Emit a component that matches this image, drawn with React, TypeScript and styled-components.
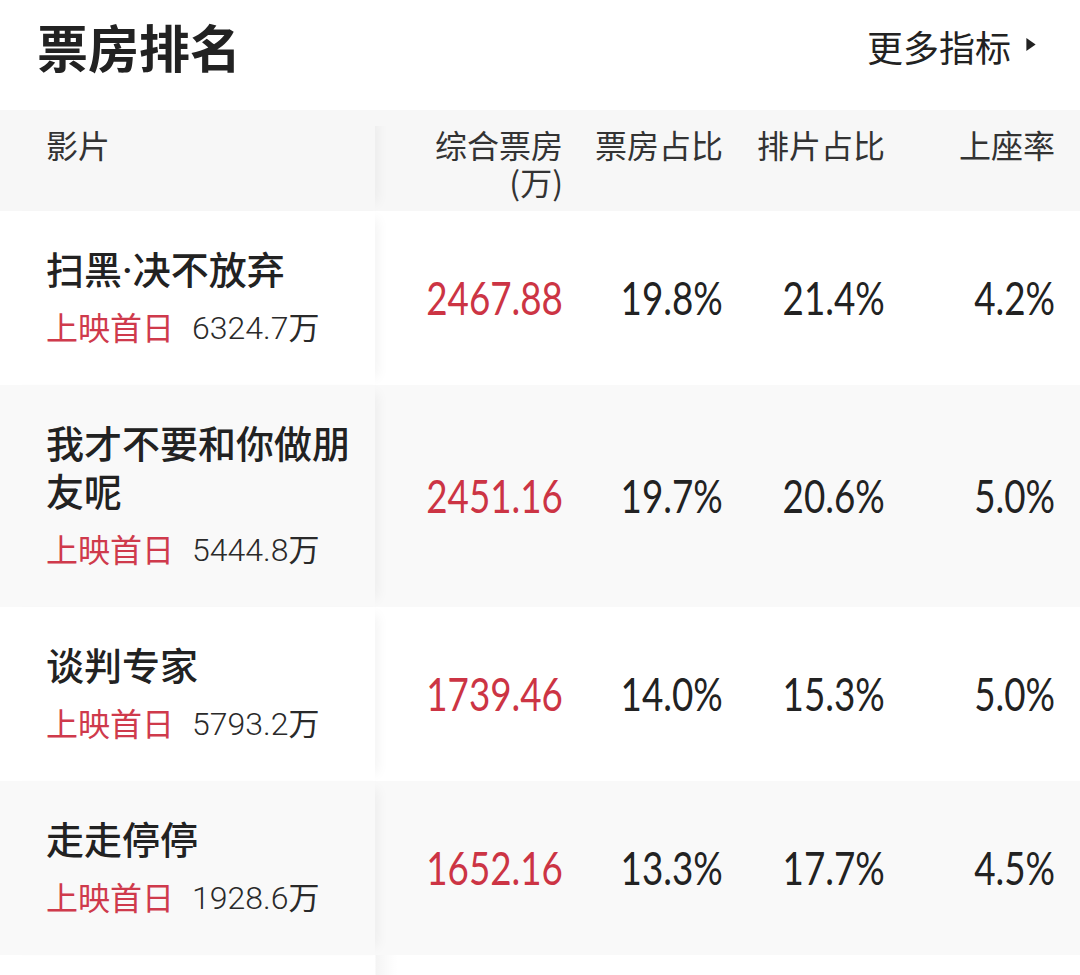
import React from 'react';
import styled, { createGlobalStyle } from 'styled-components';

interface Movie {
  name: string;
  firstDay: string;
  boxOffice: string;
  boxShare: string;
  showShare: string;
  seatRate: string;
}

const movies: Movie[] = [
  { name: '扫黑·决不放弃', firstDay: '6324.7', boxOffice: '2467.88', boxShare: '19.8%', showShare: '21.4%', seatRate: '4.2%' },
  { name: '我才不要和你做朋友呢', firstDay: '5444.8', boxOffice: '2451.16', boxShare: '19.7%', showShare: '20.6%', seatRate: '5.0%' },
  { name: '谈判专家', firstDay: '5793.2', boxOffice: '1739.46', boxShare: '14.0%', showShare: '15.3%', seatRate: '5.0%' },
  { name: '走走停停', firstDay: '1928.6', boxOffice: '1652.16', boxShare: '13.3%', showShare: '17.7%', seatRate: '4.5%' },
];

const CJK = '"Noto Sans CJK SC", "Noto Sans", sans-serif';

const GlobalStyle = createGlobalStyle`
  html, body {
    margin: 0;
    padding: 0;
    background: #ffffff;
  }
  body {
    font-family: ${CJK};
    color: #222;
  }
`;

export default function App() {
  return (
    <>
      <GlobalStyle />
      <Page>
        <TopBar>
          <Title>票房排名</Title>
          <MoreLink>
            更多指标
            <Arrow viewBox="0 0 10 14" aria-hidden>
              <path d="M0 0 L10 7 L0 14 Z" fill="#222" />
            </Arrow>
          </MoreLink>
        </TopBar>

        <Table>
          <HeadRow>
            <NameHead>影片</NameHead>
            <HeadCell>
              <HeadLine>综合票房</HeadLine>
              <HeadLine>(万)</HeadLine>
            </HeadCell>
            <HeadCell>票房占比</HeadCell>
            <HeadCell>排片占比</HeadCell>
            <HeadCell>上座率</HeadCell>
          </HeadRow>

          {movies.map((m, i) => (
            <Row key={m.name} $striped={i % 2 === 1}>
              <NameCell $striped={i % 2 === 1}>
                <MovieName>{m.name}</MovieName>
                <SubLine>
                  <FirstDayLabel>上映首日</FirstDayLabel>
                  <FirstDayValue>
                    {m.firstDay}
                    <Unit>万</Unit>
                  </FirstDayValue>
                </SubLine>
              </NameCell>
              <NumCell>
                <Figure $accent>{m.boxOffice}</Figure>
              </NumCell>
              <NumCell>
                <Figure>{m.boxShare}</Figure>
              </NumCell>
              <NumCell>
                <Figure>{m.showShare}</Figure>
              </NumCell>
              <NumCell>
                <Figure>{m.seatRate}</Figure>
              </NumCell>
            </Row>
          ))}
        </Table>
      </Page>
    </>
  );
}

const Page = styled.div`
  width: 1080px;
  min-height: 975px;
  display: flex;
  flex-direction: column;
  background: #fff;
  overflow: hidden;
`;

const TopBar = styled.header`
  height: 110px;
  display: flex;
  align-items: center;
  justify-content: space-between;
  padding: 0 44px 18px 37px;
  box-sizing: border-box;
`;

const Title = styled.h1`
  margin: 0;
  font-family: ${CJK};
  font-size: 51px;
  font-weight: 700;
  line-height: 1;
  color: #222;
`;

const MoreLink = styled.div`
  display: flex;
  align-items: center;
  gap: 15px;
  font-family: ${CJK};
  font-size: 36px;
  line-height: 1;
  color: #222;
`;

const Arrow = styled.svg`
  width: 10px;
  height: 13px;
  margin-top: -3px;
`;

const GRID = '375px 188px 160px 162px 170px';

const Table = styled.div`
  flex: 1;
  display: flex;
  flex-direction: column;
  background-image: linear-gradient(
    to right,
    transparent 375px,
    rgba(0, 0, 0, 0.045) 376px,
    rgba(0, 0, 0, 0.015) 388px,
    transparent 398px
  );
`;

const HeadRow = styled.div`
  display: grid;
  grid-template-columns: ${GRID};
  padding-right: 25px;
  background: #f7f7f7;
  height: 101px;
  box-sizing: border-box;
`;

const HeadCell = styled.div`
  display: flex;
  flex-direction: column;
  align-items: flex-end;
  font-family: ${CJK};
  font-size: 32px;
  line-height: 37px;
  color: #333;
  padding-top: 16px;
`;

const HeadLine = styled.span`
  display: block;
  height: 37px;
  overflow: visible;
`;

const NameHead = styled(HeadCell)`
  align-items: flex-start;
  padding-left: 46px;
  position: relative;
  z-index: 1;
  box-shadow: 10px 0 12px -8px rgba(0, 0, 0, 0.06);
  clip-path: inset(16px -30px 0 0);
  background: #f7f7f7;
`;

const Row = styled.div<{ $striped: boolean }>`
  display: grid;
  grid-template-columns: ${GRID};
  padding-right: 25px;
  background: ${({ $striped }) => ($striped ? '#f9f9f9' : '#ffffff')};
`;

const NameCell = styled.div<{ $striped: boolean }>`
  display: flex;
  flex-direction: column;
  justify-content: center;
  padding: 36px 18px 32px 46px;
  background: ${({ $striped }) => ($striped ? '#f9f9f9' : '#ffffff')};
  position: relative;
  z-index: 1;
  box-shadow: 10px 0 12px -8px rgba(0, 0, 0, 0.06);
`;

const MovieName = styled.div`
  font-family: Roboto, ${CJK};
  font-size: 38px;
  font-weight: 500;
  line-height: 48px;
  color: #222;
`;

const SubLine = styled.div`
  display: flex;
  align-items: center;
  gap: 18px;
  margin-top: 4px;
  height: 54px;
`;

const FirstDayLabel = styled.span`
  font-family: ${CJK};
  font-size: 32px;
  line-height: 1;
  color: #cf3a4c;
`;

const FirstDayValue = styled.span`
  font-family: Roboto, ${CJK};
  font-size: 32px;
  font-weight: 300;
  line-height: 1;
  color: #2a2a2a;
  padding-top: 2px;
`;

const Unit = styled.span`
  font-family: ${CJK};
  font-size: 31px;
  font-weight: 400;
`;

const NumCell = styled.div`
  display: flex;
  align-items: center;
  justify-content: flex-end;
`;

const Figure = styled.span<{ $accent?: boolean }>`
  display: inline-block;
  font-family: Lato, "Liberation Sans", sans-serif;
  font-size: 46px;
  font-weight: 400;
  line-height: 1;
  transform: scaleX(0.8);
  transform-origin: right center;
  color: ${({ $accent }) => ($accent ? '#cc3444' : '#222')};
`;
